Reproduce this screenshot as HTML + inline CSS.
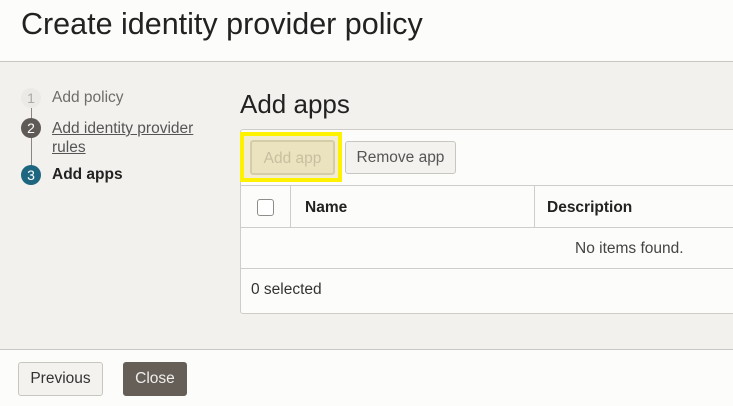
<!DOCTYPE html>
<html><head><style>
*{box-sizing:border-box;margin:0;padding:0}
body{width:733px;height:406px;overflow:hidden;background:#fcfcfa;font-family:"Liberation Sans",Arial,sans-serif;position:relative;color:#333}
.a{position:absolute}
.circ{position:absolute;width:20px;height:20px;border-radius:50%;text-align:center;line-height:20px;font-size:14px;left:21px}
.btn{position:absolute;border:1px solid #c8c6c0;border-radius:3px;background:#f3f2ef;font-size:15.5px;text-align:center}
</style></head><body>
<div class="a" style="left:0;top:0;width:733px;height:62px;background:#fcfcfa;border-bottom:1px solid #c9c8c4"></div>
<div class="a" style="left:21px;top:7px;font-size:30.5px;color:#222">Create identity provider policy</div>
<div class="a" style="left:0;top:62px;width:733px;height:288px;background:#f2f1ee;border-bottom:1px solid #c9c8c4"></div>
<div class="a" style="left:31px;top:106px;width:1px;height:62px;background:#8a8782"></div>
<div class="circ" style="top:88px;background:#eceae6;color:#aaa">1</div>
<div class="a" style="left:52px;top:89px;font-size:15.5px;color:#6f6d69">Add policy</div>
<div class="circ" style="top:118px;background:#5f5a55;color:#fff">2</div>
<div class="a" style="left:52px;top:119px;font-size:15.5px;color:#555;text-decoration:underline;line-height:19px">Add identity provider<br>rules</div>
<div class="circ" style="top:165px;background:#1e6680;color:#fff">3</div>
<div class="a" style="left:52px;top:166px;font-size:15.5px;font-weight:bold;color:#222">Add apps</div>
<div class="a" style="left:240px;top:89px;font-size:26px;color:#222">Add apps</div>
<div class="a" style="left:240px;top:129px;width:500px;height:185px;background:#fcfcfa;border:1px solid #cfcdc9;border-radius:3px"></div>
<div class="a" style="left:240px;top:132px;width:102px;height:50px;border:4px solid #fff200;background:#f2ecd3"></div>
<div class="btn" style="left:250px;top:140px;width:85px;height:35px;line-height:33px;background:#ebe2bf;border:2px solid #d5cca8;color:#c7bf9f">Add app</div>
<div class="btn" style="left:345px;top:141px;width:111px;height:33px;line-height:31px;color:#555">Remove app</div>
<div class="a" style="left:241px;top:185px;width:495px;height:1px;background:#cfcdc9"></div>
<div class="a" style="left:241px;top:227px;width:495px;height:1px;background:#cfcdc9"></div>
<div class="a" style="left:241px;top:268px;width:495px;height:1px;background:#cfcdc9"></div>
<div class="a" style="left:290px;top:186px;width:1px;height:41px;background:#cfcdc9"></div>
<div class="a" style="left:534px;top:186px;width:1px;height:41px;background:#cfcdc9"></div>
<div class="a" style="left:257px;top:199px;width:17px;height:17px;border:1px solid #8f8d89;border-radius:3px;background:#fff"></div>
<div class="a" style="left:305px;top:199px;font-size:15.5px;font-weight:bold;color:#222">Name</div>
<div class="a" style="left:547px;top:199px;font-size:15.5px;font-weight:bold;color:#222">Description</div>
<div class="a" style="left:575px;top:240px;font-size:15.5px;color:#444">No items found.</div>
<div class="a" style="left:251px;top:281px;font-size:15.5px;color:#333">0 selected</div>
<div class="btn" style="left:18px;top:362px;width:85px;height:34px;line-height:32px;color:#333">Previous</div>
<div class="btn" style="left:123px;top:362px;width:64px;height:34px;line-height:32px;background:#655f58;border-color:#655f58;color:#f0efec">Close</div>
</body></html>
